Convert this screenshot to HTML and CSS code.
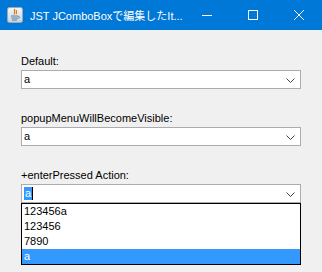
FILE: index.html
```html
<!DOCTYPE html>
<html>
<head>
<meta charset="utf-8">
<link rel="stylesheet" href="styles.css">
</head>
<body>
<div class="window">
  <div class="titlebar">
    <svg class="app-icon" width="16" height="16" viewBox="0 0 16 16">
      <defs>
        <linearGradient id="bg" x1="0" y1="0" x2="0" y2="1">
          <stop offset="0" stop-color="#f4f6f8"/>
          <stop offset="1" stop-color="#c9d2dc"/>
        </linearGradient>
      </defs>
      <rect x="0.5" y="0.5" width="15" height="15" rx="2" fill="url(#bg)" stroke="#9aa8b8"/>
      <path d="M8 2 C6 4 9 5 7 7.5 M9.5 3 C8.5 4.5 10.5 5 9 7" stroke="#e76f00" stroke-width="1.1" fill="none"/>
      <path d="M4 9 H11 M4.5 11 H10.5 M5 13 H10" stroke="#5382a1" stroke-width="1" fill="none"/>
      <path d="M11 9.2 C13 9 13 11.5 10.5 11.5" stroke="#5382a1" stroke-width="0.9" fill="none"/>
    </svg>
    <span class="title">JST JComboBoxで編集したIt...</span>
    <div class="caption-buttons">
      <div class="cap-btn">
        <svg width="10" height="10" viewBox="0 0 10 10"><path d="M0 5.5 H10" stroke="#fff" stroke-width="1"/></svg>
      </div>
      <div class="cap-btn">
        <svg width="10" height="10" viewBox="0 0 10 10"><rect x="0.5" y="0.5" width="9" height="9" fill="none" stroke="#fff" stroke-width="1"/></svg>
      </div>
      <div class="cap-btn">
        <svg width="10" height="10" viewBox="0 0 10 10"><path d="M0 0 L10 10 M10 0 L0 10" stroke="#fff" stroke-width="1"/></svg>
      </div>
    </div>
  </div>
  <div class="content">
    <div class="group">
      <div class="label">Default:</div>
      <div class="combo">
        <span class="value">a</span>
        <svg class="chevron" width="9" height="5" viewBox="0 0 9 5"><path d="M0.5 0.5 L4.5 4.5 L8.5 0.5" stroke="#444" stroke-width="1" fill="none"/></svg>
      </div>
    </div>
    <div class="group">
      <div class="label">popupMenuWillBecomeVisible:</div>
      <div class="combo">
        <span class="value">a</span>
        <svg class="chevron" width="9" height="5" viewBox="0 0 9 5"><path d="M0.5 0.5 L4.5 4.5 L8.5 0.5" stroke="#444" stroke-width="1" fill="none"/></svg>
      </div>
    </div>
    <div class="group">
      <div class="label">+enterPressed Action:</div>
      <div class="combo">
        <span class="value"><span class="selected-text">a</span><span class="caret"></span></span>
        <svg class="chevron" width="9" height="5" viewBox="0 0 9 5"><path d="M0.5 0.5 L4.5 4.5 L8.5 0.5" stroke="#444" stroke-width="1" fill="none"/></svg>
      </div>
      <div class="popup">
        <div class="item">123456a</div>
        <div class="item">123456</div>
        <div class="item">7890</div>
        <div class="item active">a</div>
      </div>
    </div>
  </div>
</div>
</body>
</html>
```

FILE: styles.css
```css
html, body {
  margin: 0;
  padding: 0;
}
body {
  width: 322px;
  height: 272px;
  overflow: hidden;
  background: #f0f0f0;
  font-family: "Liberation Sans", "Noto Sans CJK JP", sans-serif;
}
.window {
  width: 322px;
  height: 272px;
  display: flex;
  flex-direction: column;
  background: #f0f0f0;
}
.titlebar {
  height: 30px;
  background: #0078d7;
  display: flex;
  align-items: center;
  color: #fff;
  flex-shrink: 0;
}
.app-icon {
  margin-left: 7px;
  margin-right: 7px;
  flex-shrink: 0;
}
.title {
  font-family: "Liberation Sans", "Noto Sans CJK JP", sans-serif;
  font-size: 11px;
  white-space: nowrap;
  flex: 1;
  overflow: hidden;
}
.caption-buttons {
  display: flex;
  height: 30px;
}
.cap-btn {
  width: 46px;
  height: 30px;
  display: flex;
  align-items: center;
  justify-content: center;
}
.content {
  padding: 24px 21px 0 21px;
  display: flex;
  flex-direction: column;
  gap: 22px;
}
.group {
  display: flex;
  flex-direction: column;
}
.label {
  font-size: 11px;
  line-height: 15px;
  height: 15px;
  margin-bottom: 1px;
  color: #000;
  white-space: nowrap;
}
.combo {
  width: 280px;
  height: 19px;
  box-sizing: border-box;
  border: 1px solid #acacac;
  background: #fff;
  display: flex;
  align-items: center;
  justify-content: space-between;
  padding: 0 5px 0 2px;
}
.value {
  font-size: 11px;
  line-height: 13px;
  display: flex;
  align-items: center;
  color: #000;
}
.selected-text {
  background: #3399ff;
  color: #fff;
  padding: 0 1px;
  line-height: 13px;
}
.caret {
  width: 1px;
  height: 13px;
  background: #000;
}
.chevron {
  flex-shrink: 0;
  margin-top: 1px;
}
.popup {
  width: 280px;
  box-sizing: border-box;
  border: 1px solid #000;
  background: #fff;
}
.item {
  font-size: 11px;
  height: 15px;
  line-height: 15px;
  padding-left: 2px;
  color: #000;
}
.item.active {
  background: #3399ff;
  color: #fff;
  height: 15px;
}
```
